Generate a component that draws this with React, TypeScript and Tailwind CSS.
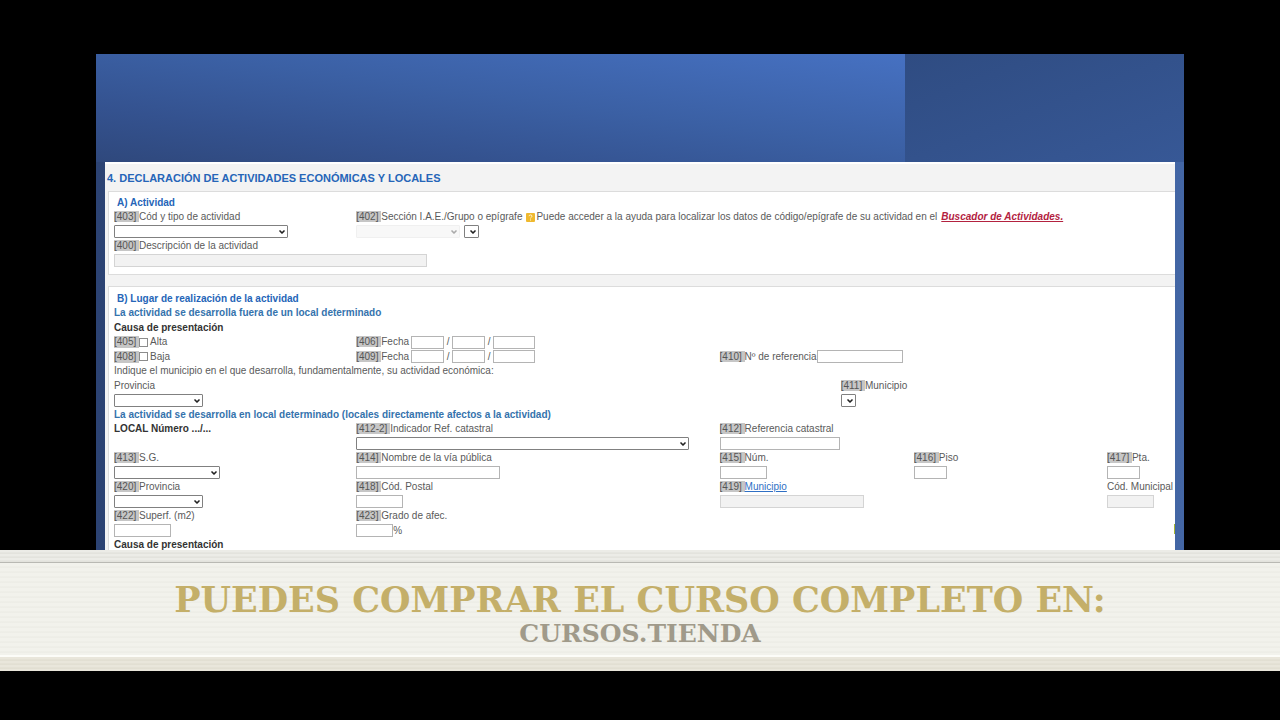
import type { ReactNode } from "react";
import { ChevronDown } from "lucide-react";
import clsx from "clsx";

const GRID =
  "grid auto-rows-[15px_14px] grid-cols-[minmax(0,242fr)_minmax(0,363fr)_minmax(0,121fr)_minmax(0,73fr)_minmax(0,193fr)_minmax(0,68fr)] items-center whitespace-nowrap pl-[5px]";

type TagProps = { code: string };

function Tag({ code }: TagProps) {
  return <span className="whitespace-pre bg-[#c6c6c6] text-[#555]">{`[${code}] `}</span>;
}

type LabelProps = {
  code?: string;
  htmlFor: string;
  className?: string;
  children: ReactNode;
};

function Label({ code, htmlFor, className, children }: LabelProps) {
  return (
    <label htmlFor={htmlFor} className={className}>
      {code && <Tag code={code} />}
      {children}
    </label>
  );
}

type ControlProps = {
  id: string;
  className?: string;
  disabled?: boolean;
  label?: string;
};

function TextField({ id, className, disabled, label }: ControlProps) {
  return (
    <input
      id={id}
      type="text"
      aria-label={label}
      disabled={disabled}
      className={clsx(
        "h-[13px] border px-1",
        disabled ? "border-[#d4d4d4] bg-[#f2f2f2]" : "border-[#b4b4b4] bg-white",
        className
      )}
    />
  );
}

function SelectField({ id, className, disabled, label }: ControlProps) {
  return (
    <span className={clsx("relative inline-block h-[13px]", className)}>
      <select
        id={id}
        aria-label={label}
        disabled={disabled}
        className={clsx(
          "block h-full w-full appearance-none rounded-[1px] border",
          disabled ? "border-[#f0f0f0] bg-[#f8f8f8]" : "border-[#808080] bg-white"
        )}
      >
        <option value=""></option>
      </select>
      <ChevronDown
        size={8}
        strokeWidth={5}
        className={clsx(
          "pointer-events-none absolute right-[2px] top-[3px]",
          disabled ? "text-[#aaa]" : "text-[#222]"
        )}
      />
    </span>
  );
}

function DateField({ code, id }: { code: string; id: string }) {
  return (
    <div className="col-start-2 flex items-center">
      <Label code={code} htmlFor={`${id}-dia`}>
        Fecha
      </Label>
      <TextField id={`${id}-dia`} className="ml-[2px] w-[33px]" />
      <span className="w-2 text-center">/</span>
      <TextField id={`${id}-mes`} label="Mes" className="w-[33px]" />
      <span className="w-2 text-center">/</span>
      <TextField id={`${id}-anio`} label="Año" className="w-[42px]" />
    </div>
  );
}

function CheckField({ code, id, children }: { code: string; id: string; children: ReactNode }) {
  return (
    <div className="col-start-1 flex items-center">
      <Tag code={code} />
      <input
        id={id}
        type="checkbox"
        className="mr-[2px] size-[9px] appearance-none border border-[#8c8c8c] bg-white"
      />
      <label htmlFor={id}>{children}</label>
    </div>
  );
}

function HelpIcon() {
  return (
    <svg viewBox="0 0 9 9" className="ml-1 mr-px size-[9px]" aria-hidden="true">
      <rect width="9" height="9" rx="1" fill="#efb92f" />
      <path
        d="M3 3.2C3 1.5 6 1.5 6 3.2C6 4.3 4.5 4.3 4.5 5.4M4.5 6.5V7.5"
        fill="none"
        stroke="#fff6d8"
        strokeWidth="1"
      />
    </svg>
  );
}

function ActivitySection() {
  return (
    <section className="ml-[3px] border-y border-l border-[#dcdcdc] bg-white pb-[6px] pt-[3px]">
      <div className={GRID}>
        <h2 className="col-start-1 pl-[3px] font-bold text-[#2565b8]">A) Actividad</h2>

        <Label code="403" htmlFor="c403" className="col-start-1">
          Cód y tipo de actividad
        </Label>
        <div className="col-span-5 col-start-2 flex items-center">
          <Label code="402" htmlFor="c402">
            Sección I.A.E./Grupo o epígrafe
          </Label>
          <HelpIcon />
          <span>
            Puede acceder a la ayuda para localizar los datos de código/epígrafe de su actividad en el
          </span>
          <a href="#buscador" className="ml-1 font-bold italic text-[#b3223f] underline">
            Buscador de Actividades.
          </a>
        </div>

        <SelectField id="c403" className="col-start-1 w-[174px]" />
        <div className="col-start-2 flex gap-1">
          <SelectField id="c402" className="w-[104px]" disabled />
          <SelectField id="c402-grupo" label="Grupo" className="w-[15px]" />
        </div>

        <Label code="400" htmlFor="c400" className="col-start-1">
          Descripción de la actividad
        </Label>
        <TextField id="c400" disabled className="col-span-2 col-start-1 w-[313px]" />
      </div>
    </section>
  );
}

function PlaceSection() {
  return (
    <section className="ml-[3px] mt-[11px] border-l border-t border-[#dcdcdc] bg-white pb-6 pt-1">
      <div className={GRID}>
        <h2 className="col-span-2 col-start-1 pl-[3px] font-bold text-[#2565b8]">
          B) Lugar de realización de la actividad
        </h2>
        <h3 className="col-span-2 col-start-1 font-bold text-[#3573ad]">
          La actividad se desarrolla fuera de un local determinado
        </h3>
        <h4 className="col-start-1 font-bold text-[#333]">Causa de presentación</h4>

        <CheckField code="405" id="c405">
          Alta
        </CheckField>
        <DateField code="406" id="c406" />

        <CheckField code="408" id="c408">
          Baja
        </CheckField>
        <DateField code="409" id="c409" />
        <div className="col-span-4 col-start-3 flex items-center">
          <Label code="410" htmlFor="c410">
            Nº de referencia
          </Label>
          <TextField id="c410" className="w-[86px]" />
        </div>

        <p className="col-span-2 col-start-1">
          Indique el municipio en el que desarrolla, fundamentalmente, su actividad económica:
        </p>

        <Label htmlFor="provincia" className="col-start-1">
          Provincia
        </Label>
        <Label code="411" htmlFor="c411" className="col-start-4">
          Municipio
        </Label>
        <SelectField id="provincia" className="col-start-1 w-[89px]" />
        <SelectField id="c411" className="col-start-4 w-[15px]" />

        <h3 className="col-span-3 col-start-1 font-bold text-[#3573ad]">
          La actividad se desarrolla en local determinado (locales directamente afectos a la actividad)
        </h3>

        <h4 className="col-start-1 font-bold text-[#333]">LOCAL Número .../...</h4>
        <Label code="412-2" htmlFor="c412-2" className="col-start-2">
          Indicador Ref. catastral
        </Label>
        <Label code="412" htmlFor="c412" className="col-start-3">
          Referencia catastral
        </Label>
        <SelectField id="c412-2" className="col-start-2 w-[333px]" />
        <TextField id="c412" className="col-start-3 w-[120px]" />

        <Label code="413" htmlFor="c413" className="col-start-1">
          S.G.
        </Label>
        <Label code="414" htmlFor="c414" className="col-start-2">
          Nombre de la vía pública
        </Label>
        <Label code="415" htmlFor="c415" className="col-start-3">
          Núm.
        </Label>
        <Label code="416" htmlFor="c416" className="col-start-5">
          Piso
        </Label>
        <Label code="417" htmlFor="c417" className="col-start-6">
          Pta.
        </Label>
        <SelectField id="c413" className="col-start-1 w-[106px]" />
        <TextField id="c414" className="col-start-2 w-[144px]" />
        <TextField id="c415" className="col-start-3 w-[47px]" />
        <TextField id="c416" className="col-start-5 w-[33px]" />
        <TextField id="c417" className="col-start-6 w-[33px]" />

        <Label code="420" htmlFor="c420" className="col-start-1">
          Provincia
        </Label>
        <Label code="418" htmlFor="c418" className="col-start-2">
          Cód. Postal
        </Label>
        <div className="col-start-3">
          <Tag code="419" />
          <a href="#municipio" className="text-[#2f6fc4] underline">
            Municipio
          </a>
        </div>
        <Label htmlFor="cod-municipal" className="col-start-6">
          Cód. Municipal
        </Label>
        <SelectField id="c420" className="col-start-1 w-[89px]" />
        <TextField id="c418" className="col-start-2 w-[47px]" />
        <TextField id="c419" label="Municipio" disabled className="col-span-2 col-start-3 w-[144px]" />
        <TextField id="cod-municipal" disabled className="col-start-6 w-[47px]" />

        <Label code="422" htmlFor="c422" className="col-start-1">
          Superf. (m2)
        </Label>
        <Label code="423" htmlFor="c423" className="col-start-2">
          Grado de afec.
        </Label>
        <TextField id="c422" className="col-start-1 w-[57px]" />
        <div className="col-start-2 flex items-center">
          <TextField id="c423" className="w-[37px]" />
          <span>%</span>
        </div>

        <h4 className="col-start-1 font-bold text-[#333]">Causa de presentación</h4>
      </div>
    </section>
  );
}

function Banner() {
  return (
    <footer className="shrink-0 bg-[#efefe8] text-center font-['DejaVu_Serif','Liberation_Serif',serif] font-bold uppercase">
      <div className="h-3 bg-[repeating-linear-gradient(#ecece7_0px,#ecece7_2px,#e0e0da_3px,#e6e6e0_4px)]" />
      <div className="h-[95px] border-b-2 border-t border-b-[#fcfcf8] border-t-[#b9b9b3] bg-[repeating-linear-gradient(#f2f2ec_0px,#f2f2ec_3px,#ebebe4_4px,#f0f0ea_5px)] pt-[18px]">
        <h2 className="text-[35px] leading-[38px] text-[#c4af69]">Puedes comprar el curso completo en:</h2>
        <p className="text-[25px] leading-[30px] text-[#a09a8a]">cursos.tienda</p>
      </div>
      <div className="h-[14px] bg-[repeating-linear-gradient(#e9e6db_0px,#e9e6db_2px,#dfdccf_3px,#e5e2d6_4px)]" />
    </footer>
  );
}

export default function App() {
  return (
    <div className="flex h-screen flex-col bg-black pb-[49px] pt-[54px]">
      <main className="mx-[7.5%] min-h-0 flex-1 overflow-hidden bg-linear-to-r from-[#2c4373] to-[#4366a5] font-['Liberation_Sans',Arial,sans-serif] text-[10px] leading-[12px] text-[#5a5a5a]">
        <div className="flex h-[108px]">
          <div className="flex-1 bg-[linear-gradient(to_bottom_left,#4671c2,#3b60a4_45%,#34528f_75%,#2f487c)]" />
          <div className="w-[25.6%] bg-linear-to-br from-[#2f4c82] to-[#375896]" />
        </div>
        <div className="relative mx-[9px] bg-[#f3f3f3]">
          <h1 className="h-[29px] border-t-2 border-white pl-[2px] text-[11px] font-bold leading-[29px] text-[#2565b8]">
            4. DECLARACIÓN DE ACTIVIDADES ECONÓMICAS Y LOCALES
          </h1>
          <ActivitySection />
          <PlaceSection />
          <span className="absolute right-0 top-[362px] h-[10px] w-px bg-[#a8b832]" />
        </div>
      </main>
      <Banner />
    </div>
  );
}
